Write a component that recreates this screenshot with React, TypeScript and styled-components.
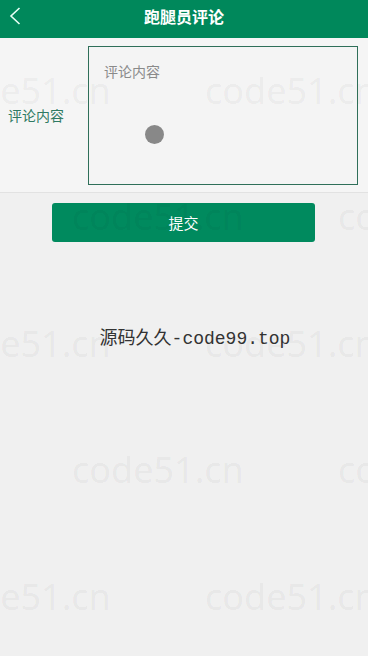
import styled, { createGlobalStyle } from 'styled-components';

const GlobalStyle = createGlobalStyle`
    * {
        box-sizing: border-box;
    }
    body {
        margin: 0;
        background-color: #f0f0f0;
        font-family: 'Noto Sans CJK SC', 'Noto Sans', sans-serif;
    }
`;

// watermark baselines, every other row shifted half a column
const WATERMARK_ROWS = [104, 230, 357, 483, 610];

const App = () => {
    return (
        <Page>
            <GlobalStyle />
            <Header>
                <BackButton aria-label="back">
                    <svg width="14" height="20" viewBox="0 0 14 20">
                        <polyline
                            points="10.5,2 2,10 10.5,18"
                            fill="none"
                            stroke="#e8fff6"
                            strokeWidth="1.6"
                        />
                    </svg>
                </BackButton>
                <Title>跑腿员评论</Title>
            </Header>

            <FormSection>
                <FieldLabel>评论内容</FieldLabel>
                <TextBox>
                    <Placeholder>评论内容</Placeholder>
                    <TouchDot />
                </TextBox>
            </FormSection>

            <ButtonRow>
                <SubmitButton>提交</SubmitButton>
            </ButtonRow>

            <SiteMark>源码久久-code99.top</SiteMark>

            {WATERMARK_ROWS.map((baseline, index) => (
                <WatermarkRow key={baseline} style={{ top: baseline - 38 }}>
                    <Watermark $left={index % 2 === 0 ? -61 : 72}>
                        code51.cn
                    </Watermark>
                    <Watermark $left={index % 2 === 0 ? 205 : 338}>
                        code51.cn
                    </Watermark>
                </WatermarkRow>
            ))}
        </Page>
    );
};

const Page = styled.div`
    position: relative;
    width: 100%;
    min-height: 656px;
    overflow: hidden;
    background-color: #f0f0f0;
`;

const Header = styled.header`
    position: relative;
    height: 38px;
    padding-bottom: 6px;
    background-color: #00885b;
    display: flex;
    align-items: center;
    justify-content: center;
`;

const BackButton = styled.div`
    position: absolute;
    left: 9px;
    top: 6px;
    width: 14px;
    height: 20px;
    display: flex;
`;

const Title = styled.h1`
    margin: 0;
    font-size: 16px;
    font-weight: 700;
    color: #ffffff;
`;

const FormSection = styled.section`
    height: 155px;
    background-color: #f5f5f5;
    border-bottom: 1px solid #e2e2e2;
    display: flex;
    align-items: center;
    padding: 0 10px 0 8px;
`;

const FieldLabel = styled.span`
    width: 80px;
    font-size: 14px;
    color: #2f7a63;
    line-height: 1;
`;

const TextBox = styled.div`
    position: relative;
    flex: 1;
    height: 139px;
    margin-top: 1px;
    border: 1px solid #2f6f59;
    background-color: #f4f4f4;
    padding: 11px 15px;
`;

const Placeholder = styled.span`
    font-size: 14px;
    color: #8a8a8a;
    line-height: 16px;
`;

const TouchDot = styled.span`
    position: absolute;
    left: 56px;
    top: 78px;
    width: 19px;
    height: 19px;
    border-radius: 50%;
    background-color: #888888;
`;

const ButtonRow = styled.div`
    padding: 10px 0 0 52px;
`;

const SubmitButton = styled.button`
    width: 263px;
    height: 39px;
    border: none;
    border-radius: 3px;
    background-color: #008a5e;
    color: #ffffff;
    font-family: 'Noto Sans CJK SC', 'Noto Sans', sans-serif;
    font-size: 15px;
    cursor: pointer;
`;

const SiteMark = styled.div`
    padding: 85px 0 0 22px;
    text-align: center;
    font-family: 'Liberation Mono', 'Noto Sans CJK SC', monospace;
    font-size: 18px;
    line-height: 24px;
    color: #333333;
`;

const WatermarkRow = styled.div`
    position: absolute;
    left: 0;
    right: 0;
    height: 50px;
    pointer-events: none;
`;

const Watermark = styled.span<{ $left: number }>`
    position: absolute;
    left: ${(p) => p.$left}px;
    top: 0;
    font-family: 'Noto Sans', sans-serif;
    font-size: 36px;
    line-height: 50px;
    color: rgba(0, 0, 0, 0.055);
    white-space: nowrap;
`;

export default App;
